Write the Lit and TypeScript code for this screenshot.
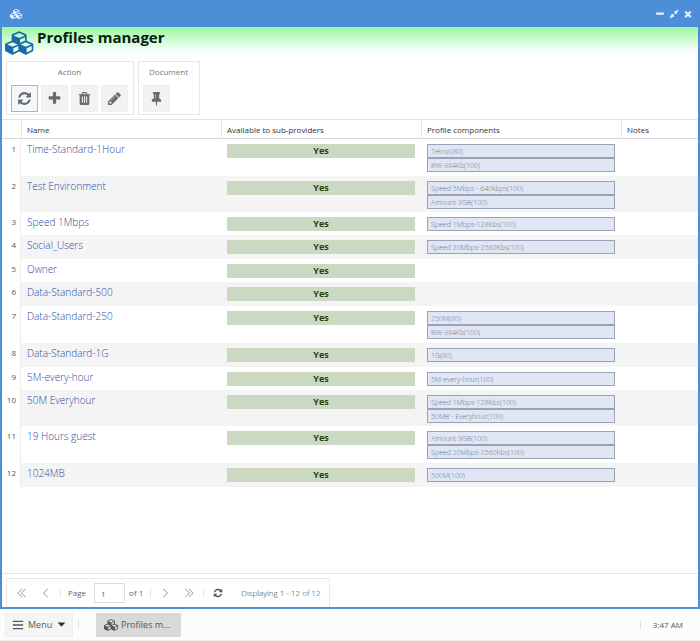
import { LitElement, html, css } from "lit";
import { customElement, property } from "lit/decorators.js";

const glyphs: Record<string, string> = {
  cubes:
    "M640 1632l384-192v-314l-384 164v342zm-64-454l404-173-404-173-404 173zm1088 454l384-192v-314l-384 164v342zm-64-454l404-173-404-173-404 173zm-448-293l384-165v-266l-384 164v267zm-64-379l441-189-441-189-441 189zm1088 518v416q0 36-19 67t-52 47l-448 224q-25 14-57 14t-57-14l-448-224q-4-2-7-4-2 2-7 4l-448 224q-25 14-57 14t-57-14l-448-224q-33-16-52-47t-19-67v-416q0-38 21.500-70t56.500-48l434-186v-400q0-38 21.500-70t56.500-48l448-192q23-10 50-10t50 10l448 192q35 16 56.500 48t21.500 70v400l434 186q36 16 57 48t21 70z",
  refresh:
    "M1639 1056q0 5-1 7-64 268-268 434.500t-478 166.500q-146 0-282.500-55t-243.500-157l-129 129q-19 19-45 19t-45-19-19-45v-448q0-26 19-45t45-19h448q26 0 45 19t19 45-19 45l-137 137q71 66 161 102t187 36q134 0 250-65t186-179q11-17 53-117 8-23 30-23h192q13 0 22.500 9.500t9.500 22.500zm25-800v448q0 26-19 45t-45 19h-448q-26 0-45-19t-19-45 19-45l138-138q-148-137-349-137-134 0-250 65t-186 179q-11 17-53 117-8 23-30 23h-199q-13 0-22.500-9.500t-9.500-22.500v-7q65-268 270-434.500t480-166.500q146 0 284 55.500t245 156.500l130-129q19-19 45-19t45 19 19 45z",
  plus: "M1600 736v192q0 40-28 68t-68 28h-416v416q0 40-28 68t-68 28h-192q-40 0-68-28t-28-68v-416h-416q-40 0-68-28t-28-68v-192q0-40 28-68t68-28h416v-416q0-40 28-68t68-28h192q40 0 68 28t28 68v416h416q40 0 68 28t28 68z",
  trash:
    "M704 1376v-704q0-14-9-23t-23-9h-64q-14 0-23 9t-9 23v704q0 14 9 23t23 9h64q14 0 23-9t9-23zm256 0v-704q0-14-9-23t-23-9h-64q-14 0-23 9t-9 23v704q0 14 9 23t23 9h64q14 0 23-9t9-23zm256 0v-704q0-14-9-23t-23-9h-64q-14 0-23 9t-9 23v704q0 14 9 23t23 9h64q14 0 23-9t9-23zm-544-992h448l-48-117q-7-9-17-11h-317q-10 2-17 11zm928 32v64q0 14-9 23t-23 9h-96v948q0 83-47 143.500t-113 60.500h-832q-66 0-113-58.500t-47-141.500v-952h-96q-14 0-23-9t-9-23v-64q0-14 9-23t23-9h309l70-167q15-37 54-63t79-26h320q40 0 79 26t54 63l70 167h309q14 0 23 9t9 23z",
  pencil:
    "M491 1536l91-91-235-235-91 91v107h128v128h107zm523-928q0-22-22-22-10 0-17 7l-542 542q-7 7-7 17 0 22 22 22 10 0 17-7l542-542q7-7 7-17zm-54-192l416 416-832 832h-416v-416zm683 96q0 53-37 90l-166 166-416-416 166-165q36-38 90-38 53 0 91 38l235 234q37 39 37 91z",
  pin: "M800 864v-448q0-14-9-23t-23-9-23 9-9 23v448q0 14 9 23t23 9 23-9 9-23zm672 352q0 26-19 45t-45 19h-429l-51 483q-2 12-10.500 20.500t-20.500 8.500h-1q-27 0-32-27l-76-485h-404q-26 0-45-19t-19-45q0-123 78.500-221.500t177.500-98.500v-512q-52 0-90-38t-38-90 38-90 90-38h640q52 0 90 38t38 90-38 90-90 38v512q99 0 177.500 98.500t78.500 221.500z",
  close:
    "M1490 1322q0 40-28 68l-136 136q-28 28-68 28t-68-28l-294-294-294 294q-28 28-68 28t-68-28l-136-136q-28-28-28-68t28-68l294-294-294-294q-28-28-28-68t28-68l136-136q28-28 68-28t68 28l294 294 294-294q28-28 68-28t68 28l136 136q28 28 28 68t-28 68l-294 294 294 294q28 28 28 68z",
  minimize:
    "M1600 736v192q0 40-28 68t-68 28H288q-40 0-68-28t-28-68V736q0-40 28-68t68-28h1216q40 0 68 28t28 68z",
  restore:
    "M896 960v560l-190-190-340 340-244-244 340-340-190-190zM960 832V272l190 190 340-340 212 212-340 340 190 158z",
  menu: "M128 256h1536v192H128zM128 800h1536v192H128zM128 1344h1536v192H128z",
  caret: "M128 512h1536L896 1344z",
  prev: "M1200 300 600 896l600 596-80 80-676-676 676-676z",
  next: "M592 300l600 596-600 596 80 80 676-676-676-676z",
  first:
    "M960 300 360 896l600 596-80 80-676-676 676-676zM1500 300 900 896l600 596-80 80-676-676 676-676z",
  last: "M832 300l600 596-600 596 80 80 676-676-676-676zM292 300l600 596-600 596 80 80 676-676-676-676z",
};

@customElement("ui-icon")
class UiIcon extends LitElement {
  @property() name = "";
  static styles = css`
    :host {
      display: inline-flex;
      width: 15px;
      height: 15px;
      flex: none;
    }
    svg {
      width: 100%;
      height: 100%;
      fill: currentColor;
    }
  `;
  render() {
    const width = this.name === "cubes" ? 2304 : 1792;
    return html`<svg viewBox="0 0 ${width} 1792" aria-hidden="true">
      <path d=${glyphs[this.name] ?? ""}></path>
    </svg>`;
  }
}

interface Profile {
  name: string;
  parts: string[];
}

const profiles: Profile[] = [
  { name: "Time-Standard-1Hour", parts: ["1Hour(80)", "BW-384Kb(100)"] },
  { name: "Test Environment", parts: ["Speed 5Mbps - 640kbps(100)", "Amount 3GB(100)"] },
  { name: "Speed 1Mbps", parts: ["Speed 1Mbps-128Kbs(100)"] },
  { name: "Social_Users", parts: ["Speed 20Mbps-2560Kbs(100)"] },
  { name: "Owner", parts: [] },
  { name: "Data-Standard-500", parts: [] },
  { name: "Data-Standard-250", parts: ["250M(80)", "BW-384Kb(100)"] },
  { name: "Data-Standard-1G", parts: ["1G(80)"] },
  { name: "5M-every-hour", parts: ["5M-every-hour(100)"] },
  { name: "50M Everyhour", parts: ["Speed 1Mbps-128Kbs(100)", "50MB - Everyhour(100)"] },
  { name: "19 Hours guest", parts: ["Amount 9GB(100)", "Speed 20Mbps-2560Kbs(100)"] },
  { name: "1024MB", parts: ["500M(100)"] },
];

@customElement("app-root")
class AppRoot extends LitElement {
  static styles = css`
    :host {
      display: flex;
      flex-direction: column;
      min-height: 100vh;
      box-sizing: border-box;
      font-family: "Open Sans", "Noto Sans", sans-serif;
      font-size: 8px;
      line-height: 12px;
      color: #555;
      background: #fcfcfc;
    }
    * {
      box-sizing: border-box;
    }
    button,
    input {
      font: inherit;
      color: inherit;
      margin: 0;
      padding: 0;
      border: 0;
      background: none;
    }
    .window {
      flex: 1;
      display: flex;
      flex-direction: column;
      border: 2px solid #4c8fd8;
      border-top: 0;
      background: #fff;
    }
    .titlebar {
      display: flex;
      align-items: center;
      gap: 4px;
      height: 27px;
      padding: 0 5px 0 8px;
      background: #4c8fd8;
      color: #e4f1ff;
    }
    .titlebar .logo {
      width: 13px;
      height: 10px;
      margin-right: auto;
    }
    .titlebar button {
      display: flex;
    }
    .titlebar button ui-icon {
      width: 10px;
      height: 10px;
    }
    .heading {
      display: flex;
      height: 31px;
      padding-left: 3px;
      gap: 2px;
      background: linear-gradient(#9cf8a2, #fff 26px);
    }
    .heading .logo {
      width: 30px;
      height: 24px;
      margin-top: 4px;
      color: #1768ad;
    }
    h1 {
      margin: 0;
      font-size: 15px;
      line-height: 20px;
      color: #06200c;
    }
    .toolbar {
      display: flex;
      gap: 4px;
      padding: 3px 4px 4px;
      border-bottom: 1px solid #e4e4e4;
    }
    .group {
      border: 1px solid #e8e8e8;
      padding: 4px 5px 4px 4px;
      height: 54px;
      text-align: center;
      color: #777;
    }
    .group h2 {
      margin: 0 0 7px;
      font: inherit;
      line-height: 12px;
    }
    .buttons {
      display: flex;
      gap: 3px;
    }
    .buttons button {
      display: flex;
      align-items: center;
      justify-content: center;
      width: 27px;
      height: 27px;
      background: #f2f2f2;
      border: 1px solid #efefef;
      color: #6a6a6a;
    }
    .buttons button.active {
      border-color: #9fb8dc;
      background: #f4f7fb;
    }
    .document {
      width: 62px;
    }
    .grid {
      flex: 1;
    }
    table {
      width: 100%;
      table-layout: fixed;
      border-collapse: separate;
      border-spacing: 0;
    }
    .c-num {
      width: 19px;
    }
    .c-main {
      width: 200px;
    }
    thead th {
      height: 19px;
      padding: 1px 5px 0;
      border-bottom: 1px solid #d8d8d8;
      border-left: 1px solid #e4e4e4;
      text-align: left;
      font-weight: 400;
      color: #333;
    }
    thead th:first-child {
      border-left: 0;
    }
    tbody td {
      height: 23px;
      padding: 5px 6px 4px;
      vertical-align: top;
    }
    tbody tr:nth-child(even) td {
      height: 24px;
      padding-bottom: 3px;
      background: #f4f4f4;
    }
    tbody th {
      padding: 4px 4px 0 0;
      border-right: 1px solid #eee;
      vertical-align: top;
      text-align: right;
      font-weight: 400;
    }
    tbody td.name {
      padding-top: 2px;
      padding-bottom: 0;
      font-size: 10px;
      font-weight: 300;
      line-height: 16px;
    }
    a {
      color: #2f48a4;
      text-decoration: none;
    }
    .yes {
      height: 14px;
      background: #cbd9c2;
      text-align: center;
      font-size: 9px;
      font-weight: 700;
      line-height: 14px;
      color: #23401c;
    }
    .chip {
      height: 14px;
      padding: 0 3px;
      border: 1px solid #9aa3b4;
      background: #e0e6f3;
      font-size: 7px;
      font-weight: 300;
      line-height: 13px;
      color: #6d7486;
      overflow: hidden;
      white-space: nowrap;
    }
    .footer {
      display: flex;
      padding: 4px 4px 0;
      border-top: 1px solid #e4e4e4;
    }
    .pager {
      display: flex;
      align-items: center;
      height: 29px;
      padding: 0 8px;
      border: 1px solid #e8e8e8;
      border-bottom: 0;
      color: #666;
    }
    .pager button {
      display: flex;
      width: 14px;
      justify-content: center;
    }
    .pager ui-icon {
      width: 12px;
      height: 12px;
      color: #999;
    }
    .pager .reload {
      color: #555;
      width: 10px;
      height: 10px;
    }
    .pager label {
      display: flex;
      align-items: center;
      gap: 8px;
    }
    .pager input {
      width: 31px;
      height: 20px;
      padding: 0 6px;
      border: 1px solid #dcdcdc;
      background: #fff;
    }
    .of {
      margin-left: 4px;
    }
    .sep {
      width: 1px;
      height: 8px;
      background: #e0e0e0;
    }
    .gap-s {
      margin: 0 7px;
    }
    .ml-s {
      margin-left: 10px;
    }
    .count {
      margin-left: 16px;
      font-weight: 300;
      color: #333;
    }
    .taskbar {
      display: flex;
      align-items: center;
      height: 32px;
      padding: 0 17px 0 5px;
      border-bottom: 1px solid #eee;
    }
    .taskbar button {
      display: flex;
      align-items: center;
      height: 24px;
      font-size: 9px;
      white-space: nowrap;
    }
    .taskbar .start {
      width: 68px;
      gap: 4px;
      padding: 0 6px;
      border: 1px solid #efefef;
      background: #f5f5f5;
    }
    .start ui-icon {
      width: 12px;
      height: 12px;
    }
    .start ui-icon:last-child {
      width: 9px;
      height: 9px;
      margin-left: auto;
      color: #333;
    }
    .taskbar .task {
      width: 85px;
      gap: 2px;
      padding: 0 8px;
      background: #d9d9d9;
    }
    .task ui-icon {
      width: 15px;
      height: 12px;
    }
    .after-start {
      margin: 0 17px 0 5px;
    }
    .clock {
      display: flex;
      align-items: center;
      gap: 12px;
      margin-left: auto;
    }
  `;

  render() {
    return html`
      <main class="window">
        <header class="titlebar">
          <ui-icon class="logo" name="cubes"></ui-icon>
          <button aria-label="Minimize"><ui-icon name="minimize"></ui-icon></button>
          <button aria-label="Restore"><ui-icon name="restore"></ui-icon></button>
          <button aria-label="Close"><ui-icon name="close"></ui-icon></button>
        </header>
        <div class="heading">
          <ui-icon class="logo" name="cubes"></ui-icon>
          <h1>Profiles manager</h1>
        </div>
        <div class="toolbar">
          <section class="group">
            <h2>Action</h2>
            <div class="buttons">
              <button class="active" aria-label="Refresh"><ui-icon name="refresh"></ui-icon></button>
              <button aria-label="Add"><ui-icon name="plus"></ui-icon></button>
              <button aria-label="Delete"><ui-icon name="trash"></ui-icon></button>
              <button aria-label="Edit"><ui-icon name="pencil"></ui-icon></button>
            </div>
          </section>
          <section class="group document">
            <h2>Document</h2>
            <div class="buttons">
              <button aria-label="Pin"><ui-icon name="pin"></ui-icon></button>
            </div>
          </section>
        </div>
        <div class="grid">
          <table>
            <colgroup>
              <col class="c-num" />
              <col class="c-main" />
              <col class="c-main" />
              <col class="c-main" />
              <col />
            </colgroup>
            <thead>
              <tr>
                <th></th>
                <th scope="col">Name</th>
                <th scope="col">Available to sub-providers</th>
                <th scope="col">Profile components</th>
                <th scope="col">Notes</th>
              </tr>
            </thead>
            <tbody>
              ${profiles.map(
                (p, i) => html`<tr>
                  <th scope="row">${i + 1}</th>
                  <td class="name"><a href="#">${p.name}</a></td>
                  <td><div class="yes">Yes</div></td>
                  <td>${p.parts.map((c) => html`<div class="chip">${c}</div>`)}</td>
                  <td></td>
                </tr>`
              )}
            </tbody>
          </table>
        </div>
        <footer class="footer">
          <nav class="pager" aria-label="Pages">
            <button aria-label="First page"><ui-icon name="first"></ui-icon></button>
            <button class="ml-s" aria-label="Previous page"><ui-icon name="prev"></ui-icon></button>
            <span class="sep gap-s"></span>
            <label>Page <input type="text" value="1" /></label>
            <span class="of">of 1</span>
            <span class="sep gap-s"></span>
            <button aria-label="Next page"><ui-icon name="next"></ui-icon></button>
            <button class="ml-s" aria-label="Last page"><ui-icon name="last"></ui-icon></button>
            <span class="sep gap-s"></span>
            <button aria-label="Reload"><ui-icon class="reload" name="refresh"></ui-icon></button>
            <span class="count">Displaying 1 - 12 of 12</span>
          </nav>
        </footer>
      </main>
      <footer class="taskbar">
        <button class="start">
          <ui-icon name="menu"></ui-icon>Menu<ui-icon name="caret"></ui-icon>
        </button>
        <span class="sep after-start"></span>
        <button class="task"><ui-icon name="cubes"></ui-icon>Profiles m...</button>
        <div class="clock"><span class="sep"></span><time>3:47 AM</time></div>
      </footer>
    `;
  }
}
